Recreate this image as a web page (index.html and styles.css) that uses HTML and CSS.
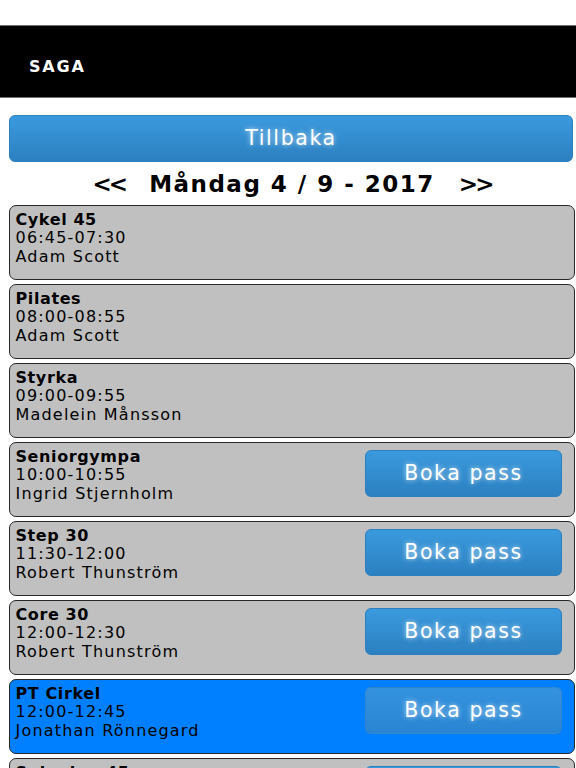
FILE: index.html
```html
<!DOCTYPE html>
<html lang="sv">

<head>
    <meta charset="UTF-8">
    <meta name="viewport" content="width=device-width, initial-scale=1.0">
    <title>SAGA - Boka pass</title>
    <link rel="stylesheet" href="styles.css">
</head>

<body>
    <div class="statusBar"></div>
    <header class="topBar">
        <span class="brand">SAGA</span>
    </header>
    <main class="content">
        <a class="btn backBtn" href="#">Tillbaka</a>
        <div class="dayNav">
            <a class="dayArrow" href="#">&lt;&lt;</a>
            <span class="dayTitle">Måndag 4 / 9 - 2017</span>
            <a class="dayArrow" href="#">&gt;&gt;</a>
        </div>
        <div class="passList">
            <div class="pass">
                <div class="passInfo">
                    <div class="passName">Cykel 45</div>
                    <div>06:45-07:30</div>
                    <div>Adam Scott</div>
                </div>
            </div>
            <div class="pass">
                <div class="passInfo">
                    <div class="passName">Pilates</div>
                    <div>08:00-08:55</div>
                    <div>Adam Scott</div>
                </div>
            </div>
            <div class="pass">
                <div class="passInfo">
                    <div class="passName">Styrka</div>
                    <div>09:00-09:55</div>
                    <div>Madelein Månsson</div>
                </div>
            </div>
            <div class="pass">
                <div class="passInfo">
                    <div class="passName">Seniorgympa</div>
                    <div>10:00-10:55</div>
                    <div>Ingrid Stjernholm</div>
                </div>
                <a class="btn bookBtn" href="#">Boka pass</a>
            </div>
            <div class="pass">
                <div class="passInfo">
                    <div class="passName">Step 30</div>
                    <div>11:30-12:00</div>
                    <div>Robert Thunström</div>
                </div>
                <a class="btn bookBtn" href="#">Boka pass</a>
            </div>
            <div class="pass">
                <div class="passInfo">
                    <div class="passName">Core 30</div>
                    <div>12:00-12:30</div>
                    <div>Robert Thunström</div>
                </div>
                <a class="btn bookBtn" href="#">Boka pass</a>
            </div>
            <div class="pass passActive">
                <div class="passInfo">
                    <div class="passName">PT Cirkel</div>
                    <div>12:00-12:45</div>
                    <div>Jonathan Rönnegard</div>
                </div>
                <a class="btn bookBtn" href="#">Boka pass</a>
            </div>
            <div class="pass">
                <div class="passInfo">
                    <div class="passName">Spinning 45</div>
                    <div>17:00-17:45</div>
                    <div>Adam Scott</div>
                </div>
                <a class="btn bookBtn" href="#">Boka pass</a>
            </div>
        </div>
    </main>
</body>

</html>
```

FILE: styles.css
```css
body {
    margin: 0;
    background-color: rgb(255, 255, 255);
    font-family: "DejaVu Sans", "Liberation Sans", sans-serif;
    color: rgb(0, 0, 0);
    overflow: hidden;
}

.statusBar {
    height: 25px;
}

.topBar {
    box-sizing: border-box;
    height: 73px;
    padding: 31px 0 0 29px;
    background-color: rgb(0, 0, 0);
    border-top: 1px solid rgb(110, 110, 110);
    border-bottom: 1px solid rgb(110, 110, 110);
}

.brand {
    display: block;
    font-size: 16px;
    font-weight: 700;
    letter-spacing: 1.8px;
    line-height: 20px;
    color: rgb(255, 255, 255);
}

.content {
    padding: 17px 1px 0 9px;
}

.btn {
    display: block;
    box-sizing: border-box;
    text-align: center;
    text-decoration: none;
    color: rgb(255, 255, 255);
    font-size: 20.5px;
    letter-spacing: 1.6px;
    background: linear-gradient(rgb(58, 154, 222), rgb(44, 128, 192));
    border: 1px solid rgb(44, 128, 192);
    border-radius: 6px;
    text-shadow: 0 0 5px rgba(255, 255, 255, 0.75);
}

.backBtn {
    height: 47px;
    margin-right: 2px;
    line-height: 45px;
}

.dayNav {
    display: flex;
    justify-content: center;
    gap: 24px;
    height: 43px;
    font-size: 23px;
    font-weight: 700;
    letter-spacing: 1.5px;
    line-height: 45px;
}

.dayArrow {
    color: rgb(0, 0, 0);
    text-decoration: none;
    letter-spacing: -3px;
}

.passList {
    display: flex;
    flex-direction: column;
    gap: 4px;
}

.pass {
    display: flex;
    justify-content: space-between;
    box-sizing: border-box;
    height: 75px;
    padding: 4.5px 12px 0 5.5px;
    background-color: rgb(192, 192, 192);
    border: 1.5px solid rgb(40, 40, 40);
    border-radius: 7px;
}

.passActive {
    background-color: rgb(0, 128, 255);
}

.passInfo {
    font-size: 16px;
    letter-spacing: 1.2px;
    line-height: 18.5px;
}

.passName {
    font-weight: 700;
    letter-spacing: 0.6px;
}

.bookBtn {
    align-self: flex-start;
    width: 197px;
    height: 47px;
    margin-top: 2px;
    line-height: 45px;
}

.passActive .bookBtn {
    background: linear-gradient(rgba(64, 150, 214, 0.8), rgba(52, 134, 198, 0.8));
    border-color: rgba(52, 134, 198, 0.6);
}
```
